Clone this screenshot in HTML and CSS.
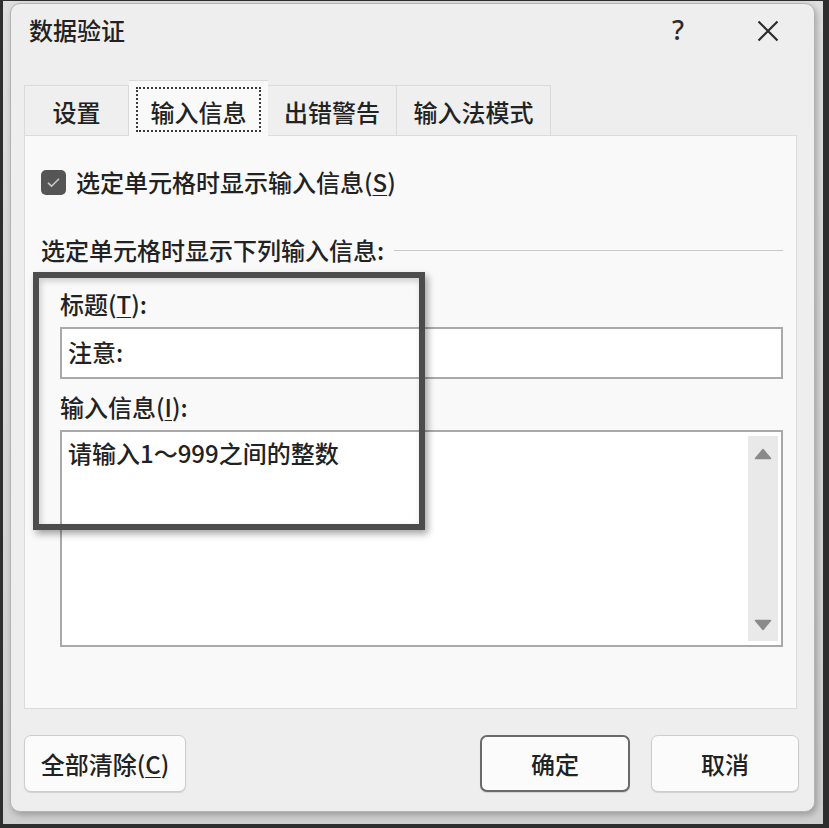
FILE: index.html
```html
<!DOCTYPE html>
<html lang="zh-CN">
<head>
<meta charset="utf-8">
<title>数据验证</title>
<link rel="stylesheet" href="styles.css">
</head>
<body>
<div class="screen">
  <div class="dialog">
    <div class="titlebar">
      <span class="title">数据验证</span>
      <span class="help">?</span>
      <svg class="close" width="22" height="22" viewBox="0 0 22 22"><path d="M1.5 1.5 L20.5 20.5 M20.5 1.5 L1.5 20.5" stroke="#2b2b2b" stroke-width="2.2" fill="none"/></svg>
    </div>
    <div class="tabs">
      <div class="tab tab-1">设置</div>
      <div class="tab tab-2 active"><span class="focus">输入信息</span></div>
      <div class="tab tab-3">出错警告</div>
      <div class="tab tab-4">输入法模式</div>
    </div>
    <div class="panel">
      <div class="check-row">
        <span class="checkbox"><svg width="25" height="25" viewBox="0 0 25 25"><path d="M7 12.8 L10.6 16.2 L18 8.8" stroke="#c9c9c9" stroke-width="1.6" fill="none"/></svg></span>
        <span class="check-label">选定单元格时显示输入信息(<u>S</u>)</span>
      </div>
      <div class="group-row">
        <span class="group-label">选定单元格时显示下列输入信息:</span>
        <span class="group-line"></span>
      </div>
      <div class="fields">
        <div class="field-label label-title">标题(<u>T</u>):</div>
        <div class="text-input">注意:</div>
        <div class="field-label label-msg">输入信息(<u>I</u>):</div>
        <div class="text-area">
          <span class="area-text">请输入1～999之间的整数</span>
          <div class="scrollbar">
            <svg width="18" height="12" viewBox="0 0 18 12"><path d="M9 1.5 L16.5 10.5 L1.5 10.5 Z" fill="#8a8a8a" stroke="#8a8a8a" stroke-width="1.5" stroke-linejoin="round"/></svg>
            <svg width="18" height="12" viewBox="0 0 18 12"><path d="M1.5 1.5 L16.5 1.5 L9 10.5 Z" fill="#8a8a8a" stroke="#8a8a8a" stroke-width="1.5" stroke-linejoin="round"/></svg>
          </div>
        </div>
      </div>
      <div class="highlight"></div>
    </div>
    <div class="footer">
      <button class="btn btn-clear">全部清除(<u>C</u>)</button>
      <button class="btn btn-ok">确定</button>
      <button class="btn btn-cancel">取消</button>
    </div>
  </div>
</div>
</body>
</html>
```
FILE: styles.css
```css
* {
  box-sizing: border-box;
  margin: 0;
  padding: 0;
}

html,
body {
  width: 829px;
  height: 828px;
  overflow: hidden;
}

body {
  font-family: "Noto Sans CJK SC", "Noto Sans", sans-serif;
  font-size: 24px;
  font-weight: 500;
  color: #222222;
  background: #d4d4d4;
}

u {
  text-decoration: underline;
  text-underline-offset: 3px;
  text-decoration-thickness: 1px;
}

.screen {
  width: 829px;
  height: 828px;
  border-style: solid;
  border-color: #2e2e2e;
  border-width: 1px 6px 4px 3px;
  padding: 2px 8px 12px 7px;
  background: linear-gradient(to bottom, #dedede, #cfcfcf);
}

.dialog {
  height: 100%;
  background: #eeeeee;
  border: 1px solid #b3b3b3;
  border-radius: 10px;
  box-shadow: 2px 3px 6px rgba(0, 0, 0, 0.25);
  display: flex;
  flex-direction: column;
}

/* title bar */
.titlebar {
  height: 76px;
  display: flex;
  align-items: flex-start;
  padding: 10px 35px 0 18px;
  flex-shrink: 0;
}

.title {
  line-height: 32px;
}

.help {
  margin-left: auto;
  width: 30px;
  text-align: center;
  font-family: "Noto Sans", sans-serif;
  font-size: 27px;
  font-weight: 500;
  line-height: 32px;
  color: #2b2b2b;
}

.close {
  margin-left: 64px;
  margin-top: 6px;
}

/* tabs */
.tabs {
  height: 55px;
  display: flex;
  align-items: flex-end;
  padding-left: 13px;
  flex-shrink: 0;
}

.tab {
  height: 50px;
  border: 1px solid #dadada;
  border-bottom: none;
  background: #efefef;
  text-align: center;
  padding-top: 10px;
  line-height: 32px;
}

.tab-1 {
  width: 105px;
}

.tab-2 {
  width: 139px;
}

.tab-3 {
  width: 129px;
  border-left: none;
}

.tab-4 {
  width: 154px;
  border-left: none;
}

.tab.active {
  background: #f9f9f9;
  padding: 6px 7px 2px 7px;
  border-left: none;
  border-right: none;
  position: relative;
  z-index: 1;
  margin-bottom: -1px;
  height: 56px;
}

.focus {
  display: block;
  height: 45px;
  border: 2px dotted #3a3a3a;
  padding-top: 7px;
  line-height: 32px;
}

/* panel */
.panel {
  position: relative;
  height: 574px;
  margin: 0 17px 0 13px;
  background: #f9f9f9;
  border: 1px solid #dcdcdc;
  flex-shrink: 0;
}

.check-row {
  display: flex;
  align-items: center;
  gap: 10px;
  padding-left: 16px;
  margin-top: 30px;
  height: 32px;
}

.checkbox {
  width: 25px;
  height: 25px;
  border-radius: 5px;
  background: #555555;
  display: flex;
  flex-shrink: 0;
}

.check-label {
  line-height: 32px;
}

.group-row {
  display: flex;
  align-items: center;
  padding-left: 16px;
  padding-right: 13px;
  margin-top: 36px;
  height: 32px;
}

.group-label {
  line-height: 32px;
  white-space: nowrap;
}

.group-line {
  flex: 1;
  height: 1px;
  background: #c9c9c9;
  margin-left: 10px;
}

.fields {
  padding-left: 35px;
  padding-right: 13px;
  display: flex;
  flex-direction: column;
}

.field-label {
  line-height: 32px;
  height: 32px;
}

.label-title {
  margin-top: 22px;
}

.text-input {
  margin-top: 7px;
  height: 52px;
  border: 2px solid #a9a9a9;
  background: #ffffff;
  padding-left: 6px;
  line-height: 46px;
}

.label-msg {
  margin-top: 12px;
}

.text-area {
  margin-top: 7px;
  height: 217px;
  border: 2px solid #a9a9a9;
  background: #ffffff;
  display: flex;
  justify-content: space-between;
  align-items: flex-start;
  padding: 4px 3px 4px 6px;
}

.area-text {
  line-height: 32px;
  margin-top: 1px;
}

.scrollbar {
  width: 30px;
  height: 100%;
  background: #e9e9e9;
  display: flex;
  flex-direction: column;
  justify-content: space-between;
  align-items: center;
  padding: 12px 0 10px;
}

/* annotation frame drawn over the fields */
.highlight {
  position: absolute;
  left: 8px;
  top: 136px;
  width: 392px;
  height: 258px;
  border: 6px solid #4c4c4c;
  box-shadow: 3px 4px 7px rgba(0, 0, 0, 0.35), inset 2px 3px 6px rgba(0, 0, 0, 0.18);
  pointer-events: none;
}

/* footer */
.footer {
  display: flex;
  align-items: flex-start;
  padding: 26px 15px 0 13px;
}

.btn {
  height: 57px;
  font-family: "Noto Sans CJK SC", "Noto Sans", sans-serif;
  font-size: 24px;
  font-weight: 500;
  color: #222222;
  background: #fbfbfb;
  border: 1px solid #cdcdcd;
  border-radius: 7px;
  box-shadow: 0 1px 1px rgba(0, 0, 0, 0.12);
  line-height: 32px;
}

.btn-clear {
  width: 162px;
}

.btn-ok {
  width: 150px;
  margin-left: auto;
  border: 2px solid #6a6a6a;
}

.btn-cancel {
  width: 148px;
  margin-left: 21px;
}
```
